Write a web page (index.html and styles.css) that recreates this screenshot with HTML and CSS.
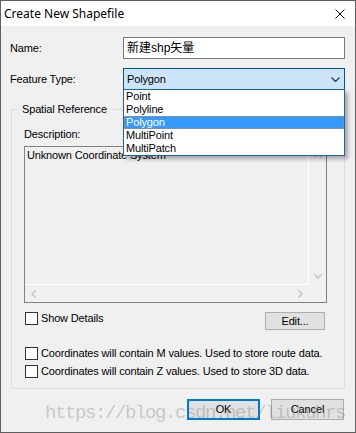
FILE: index.html
```html
<!DOCTYPE html>
<html lang="en">
<head>
  <meta charset="UTF-8">
  <title>Create New Shapefile</title>
  <link rel="stylesheet" href="styles.css">
</head>
<body>

<div class="window">
  <div class="titlebar">
    <span class="title">Create New Shapefile</span>
    <svg class="close" width="10" height="10" viewBox="0 0 10 10">
      <path d="M0.5 0.5 L9.5 9.5 M9.5 0.5 L0.5 9.5" stroke="#111" stroke-width="1"/>
    </svg>
  </div>

  <div class="dialog">
    <div class="field-row">
      <label>Name:</label>
      <div class="textbox">新建shp矢量</div>
    </div>

    <div class="field-row">
      <label>Feature Type:</label>
      <div class="combo">
        <span>Polygon</span>
        <svg width="9" height="5" viewBox="0 0 9 5">
          <path d="M0.5 0.5 L4.5 4.5 L8.5 0.5" fill="none" stroke="#333" stroke-width="1.2"/>
        </svg>
        <ul class="dropdown">
          <li>Point</li>
          <li>Polyline</li>
          <li class="selected">Polygon</li>
          <li>MultiPoint</li>
          <li>MultiPatch</li>
        </ul>
      </div>
    </div>

    <fieldset class="group">
      <legend>Spatial Reference</legend>
      <div class="desc-label">Description:</div>
      <div class="desc">
        <div class="desc-text">Unknown Coordinate System</div>
        <div class="vbar">
          <svg width="8" height="5" viewBox="0 0 8 5"><path d="M0.5 4.5 L4 1 L7.5 4.5" fill="none" stroke="#c4c4c4" stroke-width="1.5"/></svg>
          <svg width="8" height="5" viewBox="0 0 8 5"><path d="M0.5 0.5 L4 4 L7.5 0.5" fill="none" stroke="#c4c4c4" stroke-width="1.5"/></svg>
        </div>
        <div class="hbar">
          <svg width="5" height="8" viewBox="0 0 5 8"><path d="M4.5 0.5 L1 4 L4.5 7.5" fill="none" stroke="#c4c4c4" stroke-width="1.5"/></svg>
          <svg width="5" height="8" viewBox="0 0 5 8"><path d="M0.5 0.5 L4 4 L0.5 7.5" fill="none" stroke="#c4c4c4" stroke-width="1.5"/></svg>
        </div>
        <div class="corner"></div>
      </div>

      <div class="details-row">
        <label class="check"><span class="box"></span>Show Details</label>
        <button class="btn edit-btn">Edit...</button>
      </div>
      <label class="check m-row"><span class="box"></span>Coordinates will contain M values. Used to store route data.</label>
      <label class="check z-row"><span class="box"></span>Coordinates will contain Z values. Used to store 3D data.</label>
    </fieldset>

    <div class="actions">
      <button class="btn default">OK</button>
      <button class="btn">Cancel</button>
    </div>
  </div>

  <div class="watermark">https://blog.csdn.net/liukuhrs</div>
</div>

</body>
</html>
```

FILE: styles.css
```css
* {
  box-sizing: border-box;
}

body {
  margin: 0;
  font-family: "Liberation Sans", Arial, sans-serif;
  font-size: 11px;
  line-height: 13px;
  letter-spacing: -0.15px;
  color: #000;
  background: #fff;
}

.window {
  width: 356px;
  height: 433px;
  border: 1px solid #5f5f5f;
  display: flex;
  flex-direction: column;
  position: relative;
  overflow: hidden;
}

.titlebar {
  height: 25px;
  flex-shrink: 0;
  background: #fff;
  display: flex;
  align-items: center;
  justify-content: space-between;
  padding: 0 10px 0 3px;
}

.title {
  font-family: "Noto Sans", "Liberation Sans", sans-serif;
  font-size: 12px;
  letter-spacing: 0;
  color: #000;
}

.dialog {
  flex: 1;
  background: #f0f0f0;
  padding: 11px 10px 12px 9px;
  display: flex;
  flex-direction: column;
}

.field-row {
  display: grid;
  grid-template-columns: 113px 222px;
  align-items: center;
}

.field-row + .field-row {
  margin-top: 9px;
}

.textbox {
  height: 22px;
  border: 1px solid #7a7a7a;
  background: #fff;
  padding: 0 3px;
  font-family: "Liberation Sans", "Noto Sans CJK SC", sans-serif;
  font-size: 12px;
  line-height: 20px;
  letter-spacing: 0;
}

.combo {
  height: 22px;
  border: 1px solid #005499;
  background: #cce4f7;
  position: relative;
  display: flex;
  align-items: center;
  justify-content: space-between;
  padding: 0 4px 0 3px;
}

.dropdown {
  position: absolute;
  top: 20px;
  left: -1px;
  width: 222px;
  margin: 0;
  padding: 0;
  list-style: none;
  background: #fff;
  border: 1px solid #1e62a8;
  box-shadow: 3px 3px 4px rgba(0, 0, 0, 0.3);
  z-index: 5;
}

.dropdown li {
  height: 13px;
  padding-left: 2px;
}

.dropdown .selected {
  background: #3399ff;
  color: #fff;
  outline: 1px dotted #c98a4b;
  outline-offset: -1px;
}

.group {
  margin: 13px 0 0 1px;
  padding: 12px 17px 10px 12px;
  border: 1px solid #dcdcdc;
  min-width: 0;
}

.group legend {
  margin-left: -6px;
  padding: 0 4px;
}

.desc-label {
  margin-bottom: 5px;
}

.desc {
  height: 157px;
  border: 1px solid #828282;
  background: #f0f0f0;
  display: grid;
  grid-template-columns: 1fr 17px;
  grid-template-rows: 1fr 17px;
}

.desc-text {
  padding: 2px;
  border-right: 1px solid #fff;
  border-bottom: 1px solid #fff;
}

.vbar {
  display: flex;
  flex-direction: column;
  justify-content: space-between;
  align-items: center;
  padding: 6px 0;
}

.hbar {
  display: flex;
  justify-content: space-between;
  align-items: center;
  padding: 0 6px;
}

.details-row {
  margin-top: 9px;
  display: flex;
  justify-content: space-between;
  align-items: flex-start;
}

.check {
  display: flex;
  align-items: center;
  height: 13px;
  white-space: nowrap;
}

.check .box {
  width: 13px;
  height: 13px;
  margin: 0 3px 0 1px;
  border: 1px solid #333;
  background: #fff;
  flex-shrink: 0;
}

.m-row {
  margin-top: 17px;
}

.z-row {
  margin-top: 5px;
}

.btn {
  font-family: inherit;
  font-size: inherit;
  letter-spacing: inherit;
  line-height: 13px;
  color: #000;
  background: #e1e1e1;
  border: 1px solid #adadad;
  padding: 0;
  margin: 0;
}

.edit-btn {
  width: 60px;
  height: 18px;
  margin-right: 2px;
}

.actions {
  margin: 10px 1px 0 0;
  display: flex;
  justify-content: flex-end;
  gap: 11px;
}

.actions .btn {
  width: 73px;
  height: 21px;
}

.actions .default {
  border: 2px solid #0078d7;
}

.watermark {
  position: absolute;
  left: 44px;
  top: 402px;
  font-family: "Liberation Mono", monospace;
  font-size: 19px;
  line-height: 20px;
  letter-spacing: -1.4px;
  color: rgba(110, 110, 110, 0.32);
  white-space: nowrap;
  pointer-events: none;
}
```
